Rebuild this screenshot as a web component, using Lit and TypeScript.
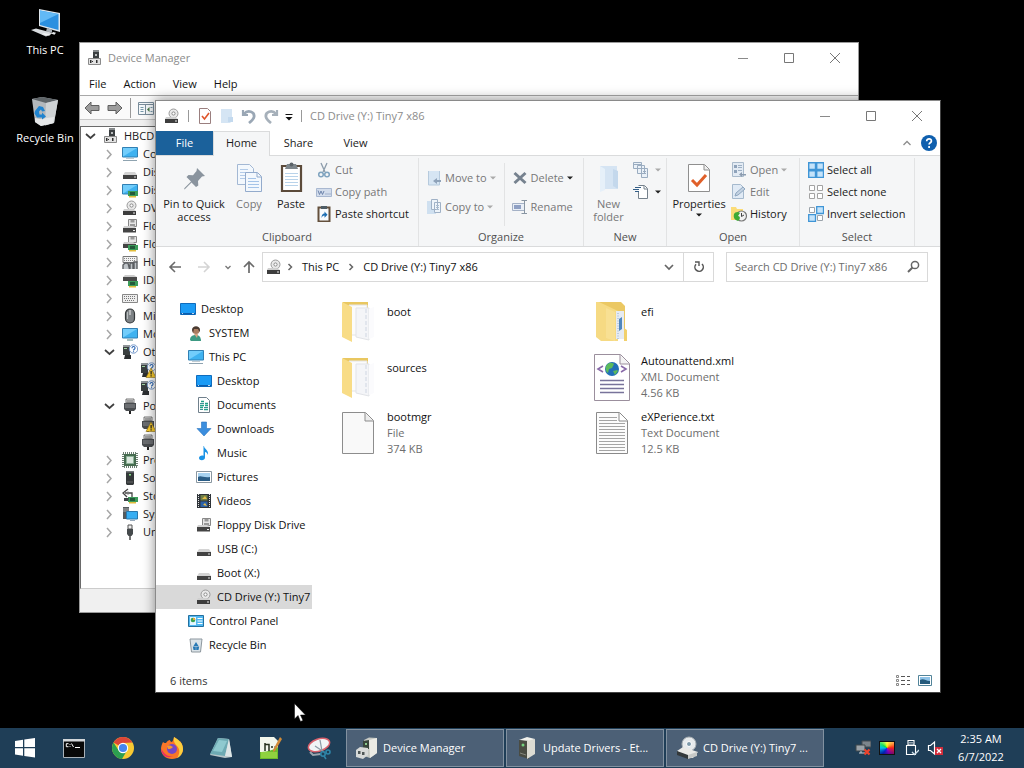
import { LitElement, html, css, svg, nothing, TemplateResult } from "lit";
import { customElement, property } from "lit/decorators.js";

/* ---------- icons ---------- */

const hdd = svg`<path d="M3 8h10l2 3H1z" fill="#d4d4d4"/><path d="M1 11h14v4H1z" fill="#424242"/><path d="M12 12.500h2v1h-2z" fill="#dcdcdc"/>`;
const warning = svg`<path d="M11 6l5 9.500H6z" fill="#ffd02e" stroke="#8b7120" stroke-width=".6"/><path d="M10.500 9h1.200v3.500h-1.200zM10.500 13.300h1.200v1.200h-1.200z" fill="#222"/>`;
const tower = svg`<path d="M1 2h7v9H1z" fill="#3a3f40"/><path d="M1 1h7v2H1z" fill="#8f9598"/><path d="M2 4h3v1H2z" fill="#9fd39f"/><path d="M3 11h6v4H2z" fill="#2b2e30"/>`;
const help = svg`<circle cx="11.500" cy="5" r="4.200" fill="#fff" stroke="#7b9ccb"/><path d="M10 4.200c0-2.400 3.200-2.200 3 0-.1 1-1.500 1.200-1.500 2.300M11.500 7.200v1" stroke="#2c68b6" stroke-width="1.100" fill="none"/>`;
const chip = svg`<path d="M6 9h10v5H6z" fill="#3c9c5a"/><path d="M8 10h5v3H8z" fill="#235a3a"/><path d="M7 14h7v1.500H7z" fill="#e2bd3c"/>`;
const port = svg`<path d="M4 1h8v4H4z" fill="#ececec" stroke="#555" stroke-width=".8"/><path d="M6 2v3M8 2v3M10 2v3" stroke="#555"/><path d="M2 5h12v6l-2 2H4l-2-2z" fill="#4a4d50"/><path d="M3 7h10M3 9h10" stroke="#8d9092"/><path d="M7 13h2v3H7z" fill="#222"/>`;
const screen = svg`<path d="M.5 2.500h15v9.500H.5z" fill="#3fb2f0" stroke="#3180b4"/><path d="M1 3h14L1 11.500z" fill="#72cdfb"/>`;
const disc = svg`<circle cx="9.500" cy="5.500" r="4.500" fill="#e9e9e9" stroke="#9b9b9b"/><circle cx="9.500" cy="5.500" r="1.600" fill="#fff" stroke="#8b8b8b"/>`;
const cd = svg`${disc}<path d="M2 9h9l3 2H1z" fill="#cfcfcf"/><path d="M1 11h13v4H1z" fill="#3d3d3d"/><path d="M11 12.500h2v1h-2z" fill="#eee"/>`;
const blue = svg`<path d="M.5 2.500h15v11H.5z" fill="#1b9bf5" stroke="#0f6cbd"/><path d="M1 12h14v1.500H1z" fill="#0b5cad"/><path d="M2 12.300h1v.8H2zM12 12.300h2v.8h-2z" fill="#fff"/>`;

const icons: Record<string, TemplateResult<2>> = {
  devmgr: svg`<path d="M6 1h6v8H6z" fill="#3b3f41"/><path d="M6 0h6v2H6z" fill="#85898b"/><path d="M8 4h2v2H8z" fill="#b9bcbd"/><path d="M1.500 8.500h12v6h-12z" fill="#e3e3e3" stroke="#8a8a8a"/><path d="M3 10h1.500v3H3zM9 10h1.500v3H9zM5 11h1v1H5z" fill="#303030"/>`,
  computer: svg`<path d="M.5 1.500h15v9.500H.5z" fill="#3fb2f0" stroke="#3180b4"/><path d="M1 2h14L1 10.500z" fill="#72cdfb"/><path d="M1 14.500h14" stroke="#8fa3b0"/><path d="M4 12.500h8" stroke="#c2ccd2"/>`,
  hdd,
  display: svg`${screen}${chip}`,
  cd,
  floppy: svg`<path d="M6.500 1.500h8v7h-8z" fill="#e6e6e6" stroke="#888"/><path d="M8.500 2h4v2.500h-4zM8 6h5v3H8z" fill="#999"/><path d="M2 8h9l3 2H1z" fill="#d2d2d2"/><path d="M1 10h13v4.500H1z" fill="#444"/><path d="M11 12h2v1h-2z" fill="#eee"/>`,
  floppyCtl: svg`<path d="M6.500.5h8v6h-8z" fill="#e6e6e6" stroke="#888"/><path d="M8.500 1h4v2.500h-4z" fill="#999"/><path d="M2 6h9l3 2H1z" fill="#ccc"/><path d="M1 8h13v4H1z" fill="#444"/>${chip}`,
  human: svg`<path d="M1 2.500h14v6H1z" fill="#f2f2f2" stroke="#777"/><path d="M2 4.500h12M2 6.500h12" stroke="#888" stroke-dasharray="1 1"/><path d="M1 15v-4l2-2h3l1.500 6M8 15V9h3v6M12 15V8h3v7" stroke="#5c5f63" stroke-width="1.400" fill="#bfc4c8"/>`,
  ide: svg`<path d="M3 3h9l3 2H1z" fill="#ccc"/><path d="M1 5h14v4H1z" fill="#4a4a4a"/>${chip}`,
  keyboard: svg`<path d="M.5 4.500h15v8H.5z" fill="#eee" stroke="#888"/><path d="M2 6.500h12M2 8.500h12M3 10.500h10" stroke="#777" stroke-dasharray="1 1"/>`,
  mouse: svg`<rect x="3.500" y="1" width="9" height="14" rx="4.500" fill="#7e8386" stroke="#34383a" stroke-width="1.200"/><path d="M8 2v5" stroke="#eee"/><path d="M5.500 4v7" stroke="#b9bdbf"/>`,
  monitor: svg`${screen}<path d="M5 14h6" stroke="#8aa" stroke-width="1.500"/>`,
  other: svg`${tower}${help}`,
  otherWarn: svg`${tower}${help}${warning}`,
  port,
  portWarn: svg`${port}${warning}`,
  cpu: svg`<path d="M2 2h12v12H2z" fill="#466c50"/><path d="M1 1h14v14H1z" fill="none" stroke="#3c5644" stroke-width="1.500" stroke-dasharray="1 1"/><path d="M4.500 4.500h7v7h-7z" fill="#dce9df" stroke="#8fb49a"/>`,
  software: svg`<path d="M4 1h8v13l-1 1H5l-1-1z" fill="#35393a"/><path d="M4 1h8v1.500H4z" fill="#74797b"/><path d="M7 4h2v1.500H7z" fill="#8be08b"/><path d="M5 12h6" stroke="#666"/>`,
  storage: svg`<path d="M6 1L1 5l4 4M3 5h7v4" fill="none" stroke="#444" stroke-width="1.300"/><circle cx="6" cy="5" r="1.500" fill="#777"/>${chip}<path d="M2 10h5l-1 3H2z" fill="#3d4246"/>`,
  system: svg`<path d="M1 1h6v12H1z" fill="#555b5e"/><path d="M1 3h6M1 5h6" stroke="#aaa"/><path d="M4.500 5.500h11v7.500h-11z" fill="#38aef2" stroke="#2a78ad"/><path d="M8 14.500h5" stroke="#9ab"/>`,
  usb: svg`<path d="M6 1h4v4H6z" fill="#eee" stroke="#555"/><path d="M5 5h6v5l-1.500 2h-3L5 10z" fill="#45494c"/><path d="M8 12v4" stroke="#444" stroke-width="1.500"/>`,
  arrowLeft: svg`<path d="M1 8l6-6v3.500h8v5H7V14z" fill="#9c9c9c" stroke="#5f5f5f" stroke-linejoin="round"/>`,
  arrowRight: svg`<path d="M15 8L9 2v3.500H1v5h8V14z" fill="#9c9c9c" stroke="#5f5f5f" stroke-linejoin="round"/>`,
  panel: svg`<path d="M.5 2.500h15v12H.5z" fill="#f6f9fb" stroke="#7a8d9b"/><path d="M1 4.500h14M7.500 5v9" stroke="#7a8d9b"/><path d="M2.500 7.500h3M2.500 9.500h3M2.500 11.500h3M12.500 7.500h2M12.500 11.500h2" stroke="#79a"/><path d="M11.500 7v5L9 9.500z" fill="#447744"/>`,
  check: svg`<path d="M2.500.5h8l3 3v12h-11z" fill="#fff" stroke="#9a7f7f"/><path d="M5 8l2.500 3L12 5" fill="none" stroke="#e0552b" stroke-width="1.600"/>`,
  blank: svg`<path d="M2 1h11v12l-2 2H2z" fill="#d5e5f4"/><path d="M9 9h5v5H9z" fill="#c3d9ee"/>`,
  undo: svg`<path d="M2 2v5h5" fill="none" stroke="#9aa7b5" stroke-width="2.200"/><path d="M3 6c4-5 11-2 10 3-.5 2.500-2.500 4-5 6" fill="none" stroke="#9aa7b5" stroke-width="2.800"/>`,
  redo: svg`<path d="M14 2v5H9" fill="none" stroke="#a6b0ba" stroke-width="2.200"/><path d="M13 6C9 1 2 4 3 9c.5 2.500 2.500 4 5 6" fill="none" stroke="#a6b0ba" stroke-width="2.800"/>`,
  customize: svg`<path d="M4.500 6.500h7" stroke="#111"/><path d="M4.500 9h7L8 12.500z" fill="#111"/>`,
  minimize: svg`<path d="M3 8.500h10" stroke="#8a8a8a"/>`,
  maximize: svg`<path d="M3.500 3.500h9v9h-9z" fill="none" stroke="#777"/>`,
  close: svg`<path d="M3 3l10 10M13 3L3 13" stroke="#777"/>`,
  chevUp: svg`<path d="M4.500 10L8 6.500 11.500 10" fill="none" stroke="#8d8d8d" stroke-width="1.300"/>`,
  chevDown: svg`<path d="M4 6l4 4 4-4" fill="none" stroke="#666" stroke-width="1.700"/>`,
  chevSmall: svg`<path d="M5.500 7L8 9.500 10.500 7" fill="none" stroke="#777" stroke-width="1.300"/>`,
  chevRight: svg`<path d="M6.500 5l3 3-3 3" fill="none" stroke="#666" stroke-width="1.500"/>`,
  treeOpen: svg`<path d="M4 6l4.500 4L13 6" fill="none" stroke="#404040" stroke-width="1.700"/>`,
  treeClosed: svg`<path d="M6 4l4 4.500L6 13" fill="none" stroke="#a6a6a6" stroke-width="1.500"/>`,
  helpBlue: svg`<circle cx="8" cy="8" r="8" fill="#0f5fae"/><path d="M5.700 6.300c0-3.400 4.900-3.100 4.700-.2-.1 1.700-2.300 1.700-2.300 3.500M8.100 11v1.900" fill="none" stroke="#fff" stroke-width="1.700"/>`,
  drop: svg`<path d="M5 6.500h6L8 9.500z" fill="currentColor"/>`,
  cut: svg`<path d="M5 1l4 9M11 1L7 10" stroke="#8c9cab" stroke-width="1.300"/><circle cx="5" cy="12.500" r="2.300" fill="none" stroke="#7fa3bf" stroke-width="1.500"/><circle cx="11" cy="12.500" r="2.300" fill="none" stroke="#7fa3bf" stroke-width="1.500"/>`,
  copyPath: svg`<path d="M.5 4.500h15v8H.5z" fill="#d3ddec" stroke="#a9b8d0"/><path d="M2 6.500l1.500 4L5 7l1.500 3.500L8 7M9.500 10h1M11.500 10h1M13.500 10h1" fill="none" stroke="#6f86ad"/>`,
  pasteShortcut: svg`<path d="M2.500 1.500h11v14h-11z" fill="#f8fbfd" stroke="#64503c" stroke-width="2"/><path d="M5 0h6v3H5z" fill="#4f5d66"/><path d="M5.500 12c0-3 1-4.500 3-4.500V5.500l3 3.200-3 3V9.500c-1.500 0-2.200.8-3 2.500z" fill="#1e6fb3"/>`,
  moveTo: svg`<path d="M2 1h11v14H2z" fill="#d6e5f3"/><path d="M2.500 1v14h11V1" fill="none" stroke="#b6cadd"/><path d="M15 12h-4v2l-4-3 4-3v2h4z" fill="#8fa3ba"/>`,
  copyTo: svg`<path d="M1 2h9v13H1z" fill="#cfe0f0"/><path d="M5.500.5h6v10h-6zM8.500 3.500h6v10h-6z" fill="#eef4fa" stroke="#9fb1c6"/><path d="M10 6.500h3M10 8.500h3M10 10.500h3" stroke="#a9bbcf"/>`,
  remove: svg`<path d="M2.500 3l11 10M13.500 3l-11 10" stroke="#76828f" stroke-width="3"/>`,
  rename: svg`<path d="M.5 4.500h12v7H.5z" fill="#e9eff7" stroke="#a4b1c6"/><path d="M2 6h7v4H2z" fill="#8fa0c4"/><path d="M12 1.500h-2.500M12 1.500h3M12 14.500H9.500M12 14.500h3M12.500 2v12" stroke="#8895a3"/>`,
  newItem: svg`<path d="M.5.5h8v6h-8zM4.500 3.500h7v8h-7zM8.500 6.500h6v9h-6z" fill="#eaf1f8" stroke="#9aacc0"/><path d="M1 2.500h7M6 6.500h4M10 9.500h3M10 11.500h3" stroke="#9aacc0"/>`,
  easyAccess: svg`<path d="M5.500 1.500h6l3 3v10h-9V8" fill="#fff" stroke="#75818c"/><path d="M11 2v3h3" fill="none" stroke="#75818c"/><path d="M2 3.500h6M0 5.500h6M2 7.500h4" stroke="#335e87"/>`,
  openApp: svg`<path d="M1.500.5h11v14h-11z" fill="#e3ebf4" stroke="#a9bacb"/><path d="M3 3h3v3H3zM3 8h3v3H3z" fill="#8fa3bb"/><path d="M7 3.500h4M7 5.500h4M7 8.500h4" stroke="#9db0c4"/><path d="M15 12h-4v-2L8 12.500l3 2.500v-1.500h4z" fill="#8c9cb0"/>`,
  edit: svg`<path d="M1.500.5h8l3 3v11h-11z" fill="#e0eaf5" stroke="#a5b9cd"/><path d="M4 12l1-3 7-6 2 2-7 6z" fill="#c3d2e2" stroke="#8fa7c0"/>`,
  history: svg`<path d="M0 1h5l1 2h6v11H0z" fill="#fbdc78"/><circle cx="10.500" cy="10" r="5" fill="#f1f1f1" stroke="#777" stroke-width="1.200"/><path d="M10.500 7v3.500l2.500-1.500" stroke="#444" fill="none"/><path d="M3 8c1-2 4-3 6-1l-2 3c3 0 2 4 0 5-3-1-5-3-4-7z" fill="#3faa35"/>`,
  selectAll: svg`<path d="M.7.7h6.800v6.800H.7zM8.700.7h6.800v6.800H8.700zM.7 8.700h6.800v6.800H.7zM8.700 8.700h6.800v6.800H8.700z" fill="#c4e3fa" stroke="#3f95d6" stroke-width="1.400"/>`,
  selectNone: svg`<path d="M1.500 1.500h5v5h-5zM9.500 1.500h5v5h-5zM1.500 9.500h5v5h-5zM9.500 9.500h5v5h-5z" fill="#fff" stroke="#a3a3a3"/>`,
  invert: svg`<path d="M1.500 1.500h5v5h-5zM9.500 9.500h5v5h-5z" fill="#fff" stroke="#9aa3ab"/><path d="M8.700.7h6.800v6.800H8.700zM.7 8.700h6.800v6.800H.7z" fill="#c4e3fa" stroke="#3f95d6" stroke-width="1.300"/>`,
  navBack: svg`<path d="M8 3L3 8l5 5M3 8h11" fill="none" stroke="#6a6a6a" stroke-width="1.600"/>`,
  navForward: svg`<path d="M8 3l5 5-5 5M13 8H2" fill="none" stroke="#d4d4d4" stroke-width="1.600"/>`,
  navUp: svg`<path d="M3 8l5-5 5 5M8 3v11" fill="none" stroke="#6a6a6a" stroke-width="1.700"/>`,
  refresh: svg`<path d="M5 5.200A4.200 4.200 0 1 0 11 5" fill="none" stroke="#555" stroke-width="1.500"/><path d="M4 3h4v4" fill="none" stroke="#555" stroke-width="1.400"/>`,
  search: svg`<circle cx="10" cy="6" r="3.600" fill="none" stroke="#666" stroke-width="1.500"/><path d="M7.500 8.500L3 13" stroke="#666" stroke-width="2"/>`,
  desktop: blue,
  user: svg`<path d="M2 15c0-4 3-5 6-5s5 2 5 6H3z" fill="#3d9a83"/><path d="M6 9h4l-1 4z" fill="#d6a382"/><circle cx="8" cy="5.500" r="3.500" fill="#a97c60"/><path d="M4 5c0-5 8-5 8 0 0 1-.5 2-.5 2L10 4H6L5 8z" fill="#4a3a30"/>`,
  document: svg`<path d="M2.500.5h8l3 3v12h-11z" fill="#fff" stroke="#70808c"/><path d="M5 4.500h3M9 6.500h3M4 8.500h4M9 8.500h3M4 10.500h3M8 12.500h4" stroke="#23a088" stroke-width="1.300"/><path d="M4 6.500h4M8 10.500h4M4 12.500h3" stroke="#3f8f96"/>`,
  download: svg`<path d="M5.500 1h5v6.500H15L8 15 1 7.500h4.500z" fill="#3b8ede" stroke="#2874bf" stroke-width=".6"/>`,
  music: svg`<path d="M8 1c0 3 5 4 4 9-.5-2-2-3-3-3v5.500C9 16 3 16 3 13c0-2 2.500-3 4.500-2.200V1z" fill="#1a93e6"/>`,
  picture: svg`<path d="M.5 2.500h15v11H.5z" fill="#fff" stroke="#8996a0"/><path d="M2 4h12v8H2z" fill="#a7d2f0"/><path d="M2 8c3-2 5 1 12 0v4H2z" fill="#2a5d86"/>`,
  video: svg`<path d="M1 1h14v14H1z" fill="#2e3338"/><path d="M2.500 1v14M13.500 1v14" stroke="#e3e3e3" stroke-dasharray="1 1"/><path d="M4.500 2h7v5.500h-7z" fill="#6f7f47"/><path d="M4.500 8.500h7V14h-7z" fill="#2b61a8"/><path d="M6 6l3-3 2 3zM7 12l2-2 2 3z" fill="#e5bd48"/>`,
  control: svg`<path d="M.5 2.500h15v11H.5z" fill="#51b7f0" stroke="#23709f"/><path d="M2 4h6v8H2z" fill="#e3f5ff"/><circle cx="5" cy="7" r="2.300" fill="#3aa352"/><path d="M5 7V4.700a2.300 2.300 0 0 1 2.300 2.300z" fill="#f2a634"/><path d="M9.500 5.500h5M9.500 8h5M9.500 10.500h5" stroke="#fff"/>`,
  bin: svg`<path d="M2 2h12l-1.500 13h-9z" fill="#dbe3e8" stroke="#8d979e"/><path d="M8 5l2.500 4h-5zM4.800 9.500h3V13H5.500zM11.200 9.500h-3V13h2.300z" fill="#2779b5"/>`,
  details: svg`<path d="M1.500 2.500h2v2h-2zM1.500 6.500h2v2h-2zM1.500 10.500h2v2h-2z" fill="#fff" stroke="#888"/><path d="M6 3.500h4M12 3.500h3M6 7.500h4M12 7.500h3M6 11.500h4M12 11.500h3" stroke="#555"/>`,
  thumbs: svg`<path d="M1.500 2.500h13v10h-13z" fill="#fff" stroke="#52849a"/><path d="M3 4h10v7H3z" fill="#8fc3e8"/><path d="M3 7c4-2 5 1 10 1v3H3z" fill="#255a7b"/>`,
  network: svg`<path d="M7 1h9v6H7z" fill="#7c858c" stroke="#454b50"/><path d="M1 5h9v6H1z" fill="#9ba2a8" stroke="#3f464b"/><path d="M4 13h6M6 11v2" stroke="#cdd2d6"/><path d="M9.500 9.500l5 5M14.500 9.500l-5 5" stroke="#f0442c" stroke-width="2.200"/>`,
  sound: svg`<path d="M1.500 5.500h2l4-3.500v12l-4-3.500h-2z" fill="none" stroke="#fff" stroke-width="1.200"/><path d="M8 7h8v8H8z" fill="#d32c3a"/><path d="M10 9l4 4M14 9l-4 4" stroke="#fff" stroke-width="1.300"/>`,
  usbTray: svg`<path d="M5 .5h6V5H5zM3.500 5.500h9v9h-9z" fill="none" stroke="#fff" stroke-width="1.100"/><path d="M6.500 2h1v1.500h-1zM8.500 2h1v1.500h-1z" fill="#fff"/><path d="M9 12l2.500 2.500L16 10" fill="none" stroke="#cfe0ea" stroke-width="1.300"/>`,
};

const largeIcons: Record<string, TemplateResult<2>> = {
  pin: svg`<path d="M19 6l8 8-3 .6-4 4.400.3 4.500-2.300 1.500-4.500-4.500L7 27l-1 .5.500-1.500 6.500-6.500L8.500 15l2-2 4.500.3L18.500 9z" fill="#8a949e"/>`,
  copy: svg`<path d="M4.500 2.500h12l4 4v16h-16z" fill="#f3f8fd" stroke="#a3b8d4"/><path d="M7 7.500h8M7 10.500h8M7 13.500h8M7 16.500h6" stroke="#b3cbe8"/><path d="M12.500 10.500h12l4 4v15h-16z" fill="#f3f8fd" stroke="#93abcc"/><path d="M24 11v4h4" fill="none" stroke="#93abcc"/><path d="M15 16.500h8M15 19.500h11M15 22.500h11M15 25.500h11" stroke="#a5c4e8"/>`,
  paste: svg`<path d="M7 4h19v25H7z" fill="#fff" stroke="#5b4a3a" stroke-width="2.200"/><path d="M12 2h9l2 5H10z" fill="#7d868c"/><circle cx="16.500" cy="2.500" r="2" fill="#5a6268"/><path d="M10 11.500h13M10 14.500h13M10 17.500h13M10 20.500h13M10 23.500h13" stroke="#b9d3ea"/>`,
  newFolder: svg`<path d="M7 4h17v23H7z" fill="#d5e4f3"/><path d="M7 4l5 3v21l-5 2z" fill="#e6f0f9"/><path d="M20 7v17l5 3V9z" fill="#c4d8ec"/>`,
  properties: svg`<path d="M5.500 2.500h16l5 5v22h-21z" fill="#fff" stroke="#8f8f8f"/><path d="M21 3v5h5" fill="#eee" stroke="#8f8f8f"/><path d="M9 18l5 5 9-10" fill="none" stroke="#e0602a" stroke-width="3"/>`,
  pc: svg`<path d="M10 1l21 4v19L10 18z" fill="#dfe6ec"/><path d="M11 2.500L29.500 6v16L11 17z" fill="#2b90e0"/><path d="M11 2.500L29.500 6 11 15z" fill="#62b9f5"/><path d="M18 20l5 1.500v3l-6-1z" fill="#a9b0b6"/><path d="M2 22l5-1.500L24 25l-7 3.500z" fill="#d7dbde"/><path d="M24 24l3 .8-1.500 2-3-1z" fill="#e6e9eb"/><path d="M15 25l7 1.600-2 1.200-7-1.600z" fill="#eff1f2"/>`,
  recycle: svg`<path d="M3 3l10-2 16 3-4 23-13 3-6-4z" fill="#b3b8bc"/><path d="M3 3l10-2 16 3-12 3z" fill="#5e6468"/><path d="M17 7l12-3-4 23-9 2.500z" fill="#cfd3d5"/><path d="M6 22l5 1 14-2-.7 6L12 30l-6-4z" fill="#e5e7e8"/><path d="M6 15l4-5 4 1 2 4-3 .5-1-2-2 2 .5 3H13v-2l4 4-4 3v-2H8l-2.500-4z" fill="#1f83cf"/>`,
};

const fileIcons: Record<string, TemplateResult<2>> = {
  folder: svg`<path d="M9 5h25v14H9z" fill="#e9c760"/><path d="M15 8h18v30H15z" fill="#fbfbfb" stroke="#e4e4e4"/><path d="M22 11h13v32l-13-3z" fill="#f4f5f8" stroke="#e1e3e7"/><path d="M32 12v29" stroke="#cfd6e2" stroke-dasharray="4 2"/><path d="M8 5l10 5v35L8 40z" fill="#f8dc86"/><path d="M35 12l5-2v30l-5 2z" fill="#fbfbfd"/>`,
  folderEfi: svg`<path d="M8 5h25l4 4v31H8z" fill="#ebc863"/><path d="M8 5h3l19 9v30H13L8 40z" fill="#f6da83"/><path d="M28 14h8v28h-8z" fill="#e6ebf2"/><path d="M30 16v26" stroke="#8eaccd" stroke-dasharray="1 1.500"/><path d="M31 22l3-2v12l-3 2z" fill="#4f86bd"/><path d="M36 31l3 2v11h-3z" fill="#f1d06c"/><path d="M18 11l9 4v29l-9-3z" fill="#f8e093"/>`,
  file: svg`<path d="M8.500 3.500h23l8 8v33h-31z" fill="#f9f9f9" stroke="#8d8d8d"/><path d="M31 4v8h8" fill="#ececec" stroke="#8d8d8d"/>`,
  xml: svg`<path d="M6.500 1.500h26l9 9v37h-35z" fill="#fff" stroke="#9b8f9d"/><path d="M32 2v9h9" fill="#f3f3f3" stroke="#9b8f9d"/><circle cx="24" cy="16" r="7" fill="#226fb8"/><path d="M18 13c3-5 7-3 8-2l-2 4-3 1-1 4c-2-1-3-4-2-7zM25 18l4-1 1 1-3 4z" fill="#5cba5c"/><path d="M15 13l-5 3 5 3M33 13l5 3-5 3" fill="none" stroke="#8869a8" stroke-width="1.600"/><path d="M12 27.500h24M12 31.500h24M12 35.500h24M12 39.500h24" stroke="#78739a" stroke-width="1.600"/>`,
  text: svg`<path d="M8.500 3.500h23l8 8v33h-31z" fill="#fcfcfc" stroke="#8a8a8a"/><path d="M11 8.500h18M11 11.500h18M11 14.500h26M11 17.500h26M11 20.500h26M11 23.500h26M11 26.500h26M11 29.500h26M11 32.500h26M11 35.500h26M11 38.500h26M11 41.500h26" stroke="#a5a5a5"/><path d="M31 4v8h8" fill="#fff" stroke="#8a8a8a"/>`,
};

const taskIcons: Record<string, TemplateResult<2>> = {
  windows: svg`<path d="M2 5l8-1.200V11H2zM11.300 3.600L22 2v9H11.300zM2 12.300h8v7.400L2 18.500zM11.300 12.300H22v9.200l-10.700-1.600z" fill="#fff"/>`,
  cmd: svg`<path d="M1.500 3.500h21v18h-21z" fill="#080808" stroke="#a9b2b9"/><path d="M1 3h22v2.500H1z" fill="#d2d6d9"/><path d="M6.500 7.700H4.300v3h2.200M8 8v.8M8 10v.8M9.500 7.500l2 3.500M13 11.500h5" fill="none" stroke="#fff"/>`,
  chrome: svg`<circle cx="12" cy="12" r="11" fill="#f8c932"/><path d="M12 12L2.500 6.500A11 11 0 0 1 21.500 6.500L12 7z" fill="#dc4638"/><path d="M2.500 6.500A11 11 0 0 0 11 23l5-8.500-8.300 0z" fill="#2c9f50"/><circle cx="12" cy="12" r="5.200" fill="#fff"/><circle cx="12" cy="12" r="4.100" fill="#4686ee"/>`,
  firefox: svg`<path d="M3 6c1 1 2 1 3 1 1-2 3-3 4-3 0 1 1 2 2 2 1-2 2-3 2-5 4 2 4 4 5 5l1-1c2 3 3 5 3 8 0 6-5 10-11 10S1 19 1 13c0-3 1-5 2-7z" fill="#fa7628"/><path d="M14 1c5 3 9 6 9 12 0 4-3 8-6 9 3-4 3-9 0-12-2-2-4-5-3-9z" fill="#fbcf3e"/><path d="M1 13c3 3 4 8 12 7-6 3-11 0-12-7z" fill="#e72f68"/><circle cx="12" cy="13" r="5" fill="#7548c6"/><path d="M7 10c3-1 4 0 6 1-2 2-3 2-5 2z" fill="#f59a2d"/>`,
  notebook: svg`<path d="M9 2l11 1 3 18-7 1-15-3z" fill="#b9c6c9"/><path d="M9 2l11 1-4 17-15-2z" fill="#6eaab3"/><path d="M10 4l8 1-5 11L4 15z" fill="#8fc9cf"/><path d="M20 3l3 18-7-1z" fill="#dee6e7"/>`,
  notepadpp: svg`<path d="M2 1h14l4 4v18H2z" fill="#f3f7ec"/><path d="M2 16c5 0 12-1 18-5v12H2z" fill="#6cbc2c"/><path d="M3 16h16v6H3z" fill="#8fd23f"/><path d="M7 7v8M7 8.500h4v6.500M13 11h2M16.500 11h2" stroke="#26301c" stroke-width="1.500" fill="none"/><path d="M22 1l2 2-7 12-2 1 .5-3z" fill="#d38b37"/>`,
  snip: svg`<ellipse cx="12" cy="9" rx="11" ry="6" transform="rotate(-18 12 9)" fill="#f1f4f6" stroke="#d9606b" stroke-width="1.500"/><path d="M3 16l3 3 8-1" fill="none" stroke="#9aa6b0" stroke-width="2"/><path d="M8 10l9 6M13 4l2 11" stroke="#8e9ca7" stroke-width="1.300"/><circle cx="16" cy="18" r="2.200" fill="none" stroke="#2f85a9" stroke-width="1.600"/><circle cx="21" cy="16" r="2" fill="none" stroke="#2f85a9" stroke-width="1.600"/><path d="M17 20l2 3" stroke="#2f85a9" stroke-width="1.600"/>`,
  devices: svg`<path d="M9 4l5-2.500L22 2v15l-7 5-6-2z" fill="#c5c8c3"/><path d="M14 4l8-2v15l-7 5z" fill="#ebebe5"/><path d="M8 5l6-1v9H8z" fill="#37453a"/><path d="M10 7h2v2h-2z" fill="#8ac98d"/><path d="M1 14l4-3 8 1v7l-5 4-7-2z" fill="#d7d9d8"/><path d="M3 15h2.500v3H3zM7 16h2.500v3H7z" fill="#4f5656"/>`,
  towerBox: svg`<path d="M4 4l8-3 8 2-6 3z" fill="#f1f1ec"/><path d="M4 4l10 1v18L4 20z" fill="#4a4c43"/><path d="M12 5l8-2v15l-8 5z" fill="#dcdbd2"/><circle cx="8" cy="9" r="1.500" fill="#76d27d"/><path d="M5 17l6 2" stroke="#85877d"/>`,
  cdrom: svg`<circle cx="14" cy="8" r="7" fill="#e6eaec" stroke="#aab1b5"/><circle cx="14" cy="8" r="2.500" fill="#7d99aa" stroke="#fff"/><path d="M2 15l6-4 15 5-5 6H12z" fill="#e9e9e6"/><path d="M2 15l11 4v4L2 19z" fill="#34393b"/><path d="M13 19l9-3v4l-9 3z" fill="#c7c9c7"/>`,
};

const icon = (name: string) =>
  html`<svg class="icon" viewBox="0 0 16 16" aria-hidden="true">${icons[name]}</svg>`;
const largeIcon = (name: string) =>
  html`<svg class="icon-lg" viewBox="0 0 32 32" aria-hidden="true">${largeIcons[name]}</svg>`;

/* ---------- shared styles ---------- */

const base = css`
  * { box-sizing: border-box; }
  :host {
    font-family: "Open Sans", "Noto Sans", sans-serif;
    font-size: 11px;
    line-height: 16px;
    color: #1a1a1a;
  }
  button, input { font: inherit; color: inherit; background: none; border: 0; padding: 0; margin: 0; white-space: nowrap; }
  ul { list-style: none; margin: 0; padding: 0; }
  .icon { width: 16px; height: 16px; flex: none; display: block; }
  .icon-lg { width: 32px; height: 32px; flex: none; display: block; }
  .titlebar { display: flex; align-items: center; height: 30px; flex: none; color: #8c8c8c; padding-left: 8px; }
  .titlebar__text { flex: 1; font-weight: normal; font-size: inherit; margin: 0; }
  .titlebar__control { width: 46px; height: 30px; display: flex; align-items: center; justify-content: center; }
`;

const windowControls = () => html`
  <button class="titlebar__control" aria-label="Minimize">${icon("minimize")}</button>
  <button class="titlebar__control" aria-label="Maximize">${icon("maximize")}</button>
  <button class="titlebar__control" aria-label="Close">${icon("close")}</button>
`;

/* ---------- Device Manager ---------- */

interface TreeNode {
  label: string;
  icon: string;
  level: number;
  state?: "open" | "closed";
}

const tree: TreeNode[] = [
  { label: "HBCD", icon: "devmgr", level: 0, state: "open" },
  { label: "Computer", icon: "computer", level: 1, state: "closed" },
  { label: "Disk drives", icon: "hdd", level: 1, state: "closed" },
  { label: "Display adapters", icon: "display", level: 1, state: "closed" },
  { label: "DVD/CD-ROM drives", icon: "cd", level: 1, state: "closed" },
  { label: "Floppy disk drives", icon: "floppy", level: 1, state: "closed" },
  { label: "Floppy drive controllers", icon: "floppyCtl", level: 1, state: "closed" },
  { label: "Human Interface Devices", icon: "human", level: 1, state: "closed" },
  { label: "IDE ATA/ATAPI controllers", icon: "ide", level: 1, state: "closed" },
  { label: "Keyboards", icon: "keyboard", level: 1, state: "closed" },
  { label: "Mice and other pointing devices", icon: "mouse", level: 1, state: "closed" },
  { label: "Monitors", icon: "monitor", level: 1, state: "closed" },
  { label: "Other devices", icon: "other", level: 1, state: "open" },
  { label: "", icon: "otherWarn", level: 2 },
  { label: "", icon: "other", level: 2 },
  { label: "Ports", icon: "port", level: 1, state: "open" },
  { label: "", icon: "portWarn", level: 2 },
  { label: "", icon: "port", level: 2 },
  { label: "Processors", icon: "cpu", level: 1, state: "closed" },
  { label: "Software devices", icon: "software", level: 1, state: "closed" },
  { label: "Storage controllers", icon: "storage", level: 1, state: "closed" },
  { label: "System devices", icon: "system", level: 1, state: "closed" },
  { label: "Universal Serial Bus controllers", icon: "usb", level: 1, state: "closed" },
];

@customElement("device-manager")
export class DeviceManager extends LitElement {
  static styles = [base, css`
    :host { display: flex; flex-direction: column; background: #fff; border: 1px solid #9a9a9a; }
    .titlebar { padding-left: 7px; }
    .titlebar__text { padding-left: 5px; }
    .menu { display: flex; height: 22px; align-items: center; gap: 17px; padding-left: 9px; color: #111; }
    .toolbar { display: flex; align-items: center; height: 25px; gap: 7px; padding-left: 4px; background: #fafafa; border-top: 1px solid #a8a8a8; border-bottom: 1px solid #c8c8c8; }
    .toolbar__line { width: 1px; height: 20px; background: #999; }
    .body { flex: 1; display: flex; flex-direction: column; background: #f0f0f0; padding-top: 6px; min-height: 0; }
    .tree { flex: 1; background: #fff; border: 1px solid #6a6a6a; border-bottom-color: #ccc; min-height: 0; overflow: hidden; }
    .tree__row { display: flex; align-items: center; height: 18px; gap: 5px; padding-left: 1px; }
    .tree__row--1 { padding-left: 20px; }
    .tree__row--2 { padding-left: 59px; }
    .tree__toggle { display: block; }
    .status { height: 23px; flex: none; }
  `];

  render() {
    return html`
      <div class="titlebar">
        ${icon("devmgr")}
        <h2 class="titlebar__text">Device Manager</h2>
        ${windowControls()}
      </div>
      <div class="menu">
        ${["File", "Action", "View", "Help"].map((m) => html`<button>${m}</button>`)}
      </div>
      <div class="toolbar">
        <button aria-label="Back">${icon("arrowLeft")}</button>
        <button aria-label="Forward">${icon("arrowRight")}</button>
        <span class="toolbar__line"></span>
        <button aria-label="Show console tree">${icon("panel")}</button>
      </div>
      <div class="body">
        <ul class="tree">
          ${tree.map((n) => html`
            <li class="tree__row tree__row--${n.level}">
              ${n.state
                ? html`<button class="tree__toggle" aria-label="Toggle ${n.label}">
                    ${icon(n.state === "open" ? "treeOpen" : "treeClosed")}
                  </button>`
                : nothing}
              ${icon(n.icon)}<span>${n.label}</span>
            </li>
          `)}
        </ul>
        <div class="status"></div>
      </div>
    `;
  }
}

/* ---------- Explorer ---------- */

const places = [
  { label: "Desktop", icon: "desktop", level: 0 },
  { label: "SYSTEM", icon: "user", level: 1 },
  { label: "This PC", icon: "computer", level: 1 },
  { label: "Desktop", icon: "desktop", level: 2 },
  { label: "Documents", icon: "document", level: 2 },
  { label: "Downloads", icon: "download", level: 2 },
  { label: "Music", icon: "music", level: 2 },
  { label: "Pictures", icon: "picture", level: 2 },
  { label: "Videos", icon: "video", level: 2 },
  { label: "Floppy Disk Drive", icon: "floppy", level: 2 },
  { label: "USB (C:)", icon: "hdd", level: 2 },
  { label: "Boot (X:)", icon: "hdd", level: 2 },
  { label: "CD Drive (Y:) Tiny7 x86", icon: "cd", level: 2, selected: true },
  { label: "Control Panel", icon: "control", level: 1 },
  { label: "Recycle Bin", icon: "bin", level: 1 },
];

const files = [
  { name: "boot", icon: "folder" },
  { name: "efi", icon: "folderEfi" },
  { name: "sources", icon: "folder" },
  { name: "Autounattend.xml", icon: "xml", type: "XML Document", size: "4.56 KB" },
  { name: "bootmgr", icon: "file", type: "File", size: "374 KB" },
  { name: "eXPerience.txt", icon: "text", type: "Text Document", size: "12.5 KB" },
];

@customElement("explorer-window")
export class ExplorerWindow extends LitElement {
  @property()
  heading = "CD Drive (Y:) Tiny7 x86";

  static styles = [base, css`
    :host { display: flex; flex-direction: column; background: #fff; border: 1px solid #8a8a8a; border-right-color: #444; border-bottom-color: #444; box-shadow: 0 0 12px rgba(0, 0, 0, 0.45); }
    .quick { display: flex; align-items: center; gap: 6px; margin-right: 6px; }
    .quick__line { width: 1px; height: 12px; margin: 0 2px; background: #999; }
    .quick .drop { width: 8px; }

    .tabs { display: flex; height: 24px; flex: none; align-items: stretch; }
    .tabs__tab { width: 57px; }
    .tabs__tab--file { background: #1b619b; color: #fff; }
    .tabs__tab--home { background: #f5f6f7; border: 1px solid #dadbdc; border-bottom: 0; margin-bottom: -1px; padding-bottom: 2px; position: relative; }
    .tabs__end { margin-left: auto; display: flex; align-items: center; gap: 6px; padding-right: 3px; }

    .ribbon { display: grid; grid-template-columns: 263px 165px 83px 133px 115px; height: 92px; flex: none; background: #f5f6f7; border-top: 1px solid #dadbdc; border-bottom: 1px solid #dadbdc; }
    .group { display: flex; flex-direction: column; border-right: 1px solid #e2e3e4; margin-top: 2px; }
    .group__body { display: flex; flex: 1; padding: 1px 2px 0 4px; }
    .group__body--spread { padding: 5px 0 3px 3px; }
    .group__label { text-align: center; color: #505050; height: 17px; line-height: 16px; }
    .large { width: 42px; display: flex; flex-direction: column; align-items: center; line-height: 13px; padding-top: 3px; white-space: normal; }
    .large--wide { width: 68px; }
    .large--medium { width: 56px; }
    .large__text { padding-top: 3px; }
    .large__drop { height: 10px; margin-top: -3px; }
    .column { display: flex; flex-direction: column; padding-left: 4px; }
    .column--line { border-left: 1px solid #e2e3e4; padding-left: 7px; margin-left: 5px; }
    .small { display: flex; align-items: center; height: 22px; gap: 3px; }
    .group__body--spread .small { height: 29px; }
    .dim { color: #777; }
    .small .drop { margin-left: -3px; color: #222; }
    .dim .drop--dim { color: #aaa; }
    .drop { width: 12px; overflow: hidden; display: flex; justify-content: center; }

    .nav { display: flex; align-items: center; height: 40px; flex: none; padding: 0 12px 0 11px; }
    .nav__buttons { display: flex; align-items: center; width: 95px; gap: 5px; }
    .nav__buttons button:nth-child(2) { margin: 0 8px; }
    .nav__buttons button:nth-child(3) { margin-left: -5px; }
    .address { flex: 1; display: flex; align-items: center; height: 30px; border: 1px solid #d9d9d9; padding-left: 3px; color: #111; }
    .address__end { margin-left: auto; padding: 0 6px; }
    .address__refresh { width: 30px; height: 28px; border-left: 1px solid #d9d9d9; display: flex; align-items: center; justify-content: center; }
    .crumb { padding: 0 4px; }
    .search { width: 202px; height: 30px; display: flex; align-items: center; border: 1px solid #d9d9d9; margin-left: 12px; padding: 0 6px 0 8px; }
    .search input { flex: 1; min-width: 0; outline: 0; }
    .search input::placeholder { color: #6d6d6d; opacity: 1; }

    .main { flex: 1; display: flex; min-height: 0; }
    .places { width: 156px; flex: none; padding-top: 10px; overflow: hidden; color: #111; }
    .place { display: flex; align-items: center; gap: 5px; height: 24px; width: 100%; padding-left: 24px; }
    .place--1 { padding-left: 32px; }
    .place--2 { padding-left: 40px; }
    .place--selected { background: #d9d9d9; }
    .files { flex: 1; display: grid; grid-template-columns: repeat(auto-fill, 254px); grid-auto-rows: 56px; align-content: start; padding: 7px 0 0 22px; }
    .file { display: flex; gap: 5px; text-align: left; padding-top: 3px; width: 100%; }
    .file__icon { width: 48px; height: 48px; flex: none; }
    .file__text { display: flex; flex-direction: column; color: #6d6d6d; }
    .file__text--folder { padding-top: 7px; }
    .file__name { color: #111; }

    .status { display: flex; align-items: center; height: 22px; flex: none; padding: 0 7px 0 14px; color: #333; gap: 6px; }
    .status__count { flex: 1; }
  `];

  private small(name: string, label: string, dim = false, drop = false, dropDim = dim) {
    return html`
      <button class="small ${dim ? "dim" : ""}">
        ${icon(name)}${label ? html`<span>${label}</span>` : html`<span></span>`}
        ${drop ? html`<span class="drop ${dropDim ? "drop--dim" : ""}">${icon("drop")}</span>` : nothing}
      </button>
    `;
  }

  private renderRibbon() {
    return html`
      <div class="ribbon">
        <div class="group">
          <div class="group__body">
            <button class="large large--wide">${largeIcon("pin")}<span class="large__text">Pin to Quick<br />access</span></button>
            <button class="large dim">${largeIcon("copy")}<span class="large__text">Copy</span></button>
            <button class="large">${largeIcon("paste")}<span class="large__text">Paste</span></button>
            <div class="column">
              ${this.small("cut", "Cut", true)}
              ${this.small("copyPath", "Copy path", true)}
              ${this.small("pasteShortcut", "Paste shortcut")}
            </div>
          </div>
          <div class="group__label">Clipboard</div>
        </div>
        <div class="group">
          <div class="group__body group__body--spread">
            <div class="column">
              ${this.small("moveTo", "Move to", true, true)}
              ${this.small("copyTo", "Copy to", true, true)}
            </div>
            <div class="column column--line">
              ${this.small("remove", "Delete", true, true, false)}
              ${this.small("rename", "Rename", true)}
            </div>
          </div>
          <div class="group__label">Organize</div>
        </div>
        <div class="group">
          <div class="group__body">
            <button class="large dim">${largeIcon("newFolder")}<span class="large__text">New<br />folder</span></button>
            <div class="column">
              ${this.small("newItem", "", true, true)}
              ${this.small("easyAccess", "", false, true)}
            </div>
          </div>
          <div class="group__label">New</div>
        </div>
        <div class="group">
          <div class="group__body">
            <button class="large large--medium">
              ${largeIcon("properties")}<span class="large__text">Properties</span>
              <span class="large__drop">${icon("drop")}</span>
            </button>
            <div class="column">
              ${this.small("openApp", "Open", true, true)}
              ${this.small("edit", "Edit", true)}
              ${this.small("history", "History")}
            </div>
          </div>
          <div class="group__label">Open</div>
        </div>
        <div class="group">
          <div class="group__body">
            <div class="column">
              ${this.small("selectAll", "Select all")}
              ${this.small("selectNone", "Select none")}
              ${this.small("invert", "Invert selection")}
            </div>
          </div>
          <div class="group__label">Select</div>
        </div>
      </div>
    `;
  }

  render() {
    return html`
      <div class="titlebar">
        <div class="quick">
          ${icon("cd")}
          <span class="quick__line"></span>
          <button aria-label="Properties">${icon("check")}</button>
          <button aria-label="New folder">${icon("blank")}</button>
          <button aria-label="Undo">${icon("undo")}</button>
          <button aria-label="Redo">${icon("redo")}</button>
          <button class="drop" aria-label="Customize">${icon("customize")}</button>
          <span class="quick__line"></span>
        </div>
        <h2 class="titlebar__text">${this.heading}</h2>
        ${windowControls()}
      </div>
      <div class="tabs">
        <button class="tabs__tab tabs__tab--file">File</button>
        <button class="tabs__tab tabs__tab--home">Home</button>
        <button class="tabs__tab">Share</button>
        <button class="tabs__tab">View</button>
        <div class="tabs__end">
          <button aria-label="Collapse ribbon">${icon("chevUp")}</button>
          <button aria-label="Help">${icon("helpBlue")}</button>
        </div>
      </div>
      ${this.renderRibbon()}
      <div class="nav">
        <div class="nav__buttons">
          <button aria-label="Back">${icon("navBack")}</button>
          <button aria-label="Forward">${icon("navForward")}</button>
          <button aria-label="Recent">${icon("chevSmall")}</button>
          <button aria-label="Up">${icon("navUp")}</button>
        </div>
        <div class="address">
          ${icon("cd")}${icon("chevRight")}
          <button class="crumb">This PC</button>
          ${icon("chevRight")}
          <button class="crumb">${this.heading}</button>
          <button class="address__end" aria-label="Previous locations">${icon("chevDown")}</button>
          <button class="address__refresh" aria-label="Refresh">${icon("refresh")}</button>
        </div>
        <label class="search">
          <input type="text" aria-label="Search" placeholder="Search ${this.heading}" />
          ${icon("search")}
        </label>
      </div>
      <div class="main">
        <ul class="places">
          ${places.map((p) => html`
            <li>
              <button class="place place--${p.level} ${p.selected ? "place--selected" : ""}">
                ${icon(p.icon)}<span>${p.label}</span>
              </button>
            </li>
          `)}
        </ul>
        <ul class="files">
          ${files.map((f) => html`
            <li>
              <button class="file">
                <svg class="file__icon" viewBox="0 0 48 48" aria-hidden="true">${fileIcons[f.icon]}</svg>
                <span class="file__text ${f.type ? "" : "file__text--folder"}">
                  <span class="file__name">${f.name}</span>
                  ${f.type ? html`<span>${f.type}</span><span>${f.size}</span>` : nothing}
                </span>
              </button>
            </li>
          `)}
        </ul>
      </div>
      <div class="status">
        <span class="status__count">${files.length} items</span>
        <button aria-label="Details view">${icon("details")}</button>
        <button aria-label="Thumbnail view">${icon("thumbs")}</button>
      </div>
    `;
  }
}

/* ---------- Taskbar ---------- */

@customElement("task-bar")
export class TaskBar extends LitElement {
  static styles = [base, css`
    :host { display: flex; align-items: stretch; height: 40px; background: #1f3e57; color: #fff; }
    .task-icon { width: 24px; height: 24px; flex: none; display: block; }
    .pinned { display: flex; }
    .pinned__button { width: 49px; display: flex; align-items: center; justify-content: center; }
    .windows { display: flex; gap: 2px; padding: 1px 0 1px 3px; }
    .windows__button { width: 158px; display: flex; align-items: center; gap: 4px; padding: 0 8px; background: #4c6076; border: 1px solid #8291a0; }
    .tray { margin-left: auto; display: flex; align-items: center; gap: 8px; }
    .spectrum { width: 16px; height: 14px; border: 1px solid #111; background: linear-gradient(rgba(255, 255, 255, 0.3), transparent 40%, rgba(0, 0, 0, 0.4)), conic-gradient(#ff0, #f22 25%, #a0f 45%, #03f 60%, #0cf 75%, #0d4 85%, #ff0); }
    .clock { width: 60px; margin-right: 13px; text-align: center; line-height: 18px; }
  `];

  private pinned = ["windows", "cmd", "chrome", "firefox", "notebook", "notepadpp", "snip"];

  private windows = [
    { icon: "devices", label: "Device Manager" },
    { icon: "towerBox", label: "Update Drivers - Et..." },
    { icon: "cdrom", label: "CD Drive (Y:) Tiny7 ..." },
  ];

  private taskIcon(name: string) {
    return html`<svg class="task-icon" viewBox="0 0 24 24" aria-hidden="true">${taskIcons[name]}</svg>`;
  }

  render() {
    return html`
      <div class="pinned">
        ${this.pinned.map((p) => html`<button class="pinned__button" aria-label=${p}>${this.taskIcon(p)}</button>`)}
      </div>
      <div class="windows">
        ${this.windows.map((w) => html`
          <button class="windows__button">${this.taskIcon(w.icon)}<span>${w.label}</span></button>
        `)}
      </div>
      <div class="tray">
        ${icon("network")}
        <span class="spectrum"></span>
        ${icon("usbTray")}
        ${icon("sound")}
        <div class="clock">2:35 AM<br />6/7/2022</div>
      </div>
    `;
  }
}

@customElement("app-root")
export class AppRoot extends LitElement {
  static styles = [base, css`
    :host { display: flex; flex-direction: column; height: 100vh; background: #000; overflow: hidden; }
    .desktop { flex: 1; position: relative; min-height: 0; }
    .shortcuts { display: flex; flex-direction: column; align-items: flex-start; gap: 24px; padding: 8px 0 0 11px; }
    .shortcut { display: flex; flex-direction: column; align-items: center; gap: 2px; width: 68px; height: 64px; color: #fff; }
    /* windows sit freely on the desktop */
    .window { position: absolute; }
    .window--devices { inset: 42px 165px 115px 79px; }
    .window--explorer { inset: 100px 83px 35px 155px; }
    .cursor { position: absolute; left: 294px; top: 703px; width: 12px; height: 19px; }
  `];

  render() {
    return html`
      <div class="desktop">
        <div class="shortcuts">
          <button class="shortcut">${largeIcon("pc")}<span>This PC</span></button>
          <button class="shortcut">${largeIcon("recycle")}<span>Recycle Bin</span></button>
        </div>
        <device-manager class="window window--devices"></device-manager>
        <explorer-window class="window window--explorer"></explorer-window>
        <svg class="cursor" viewBox="0 0 12 19" aria-hidden="true">
          <path d="M.5.500v15.500l3.500-3.500 2.500 6 2.500-1-2.500-5.500h5z" fill="#fff" stroke="#000" stroke-width=".5" />
        </svg>
      </div>
      <task-bar></task-bar>
    `;
  }
}
